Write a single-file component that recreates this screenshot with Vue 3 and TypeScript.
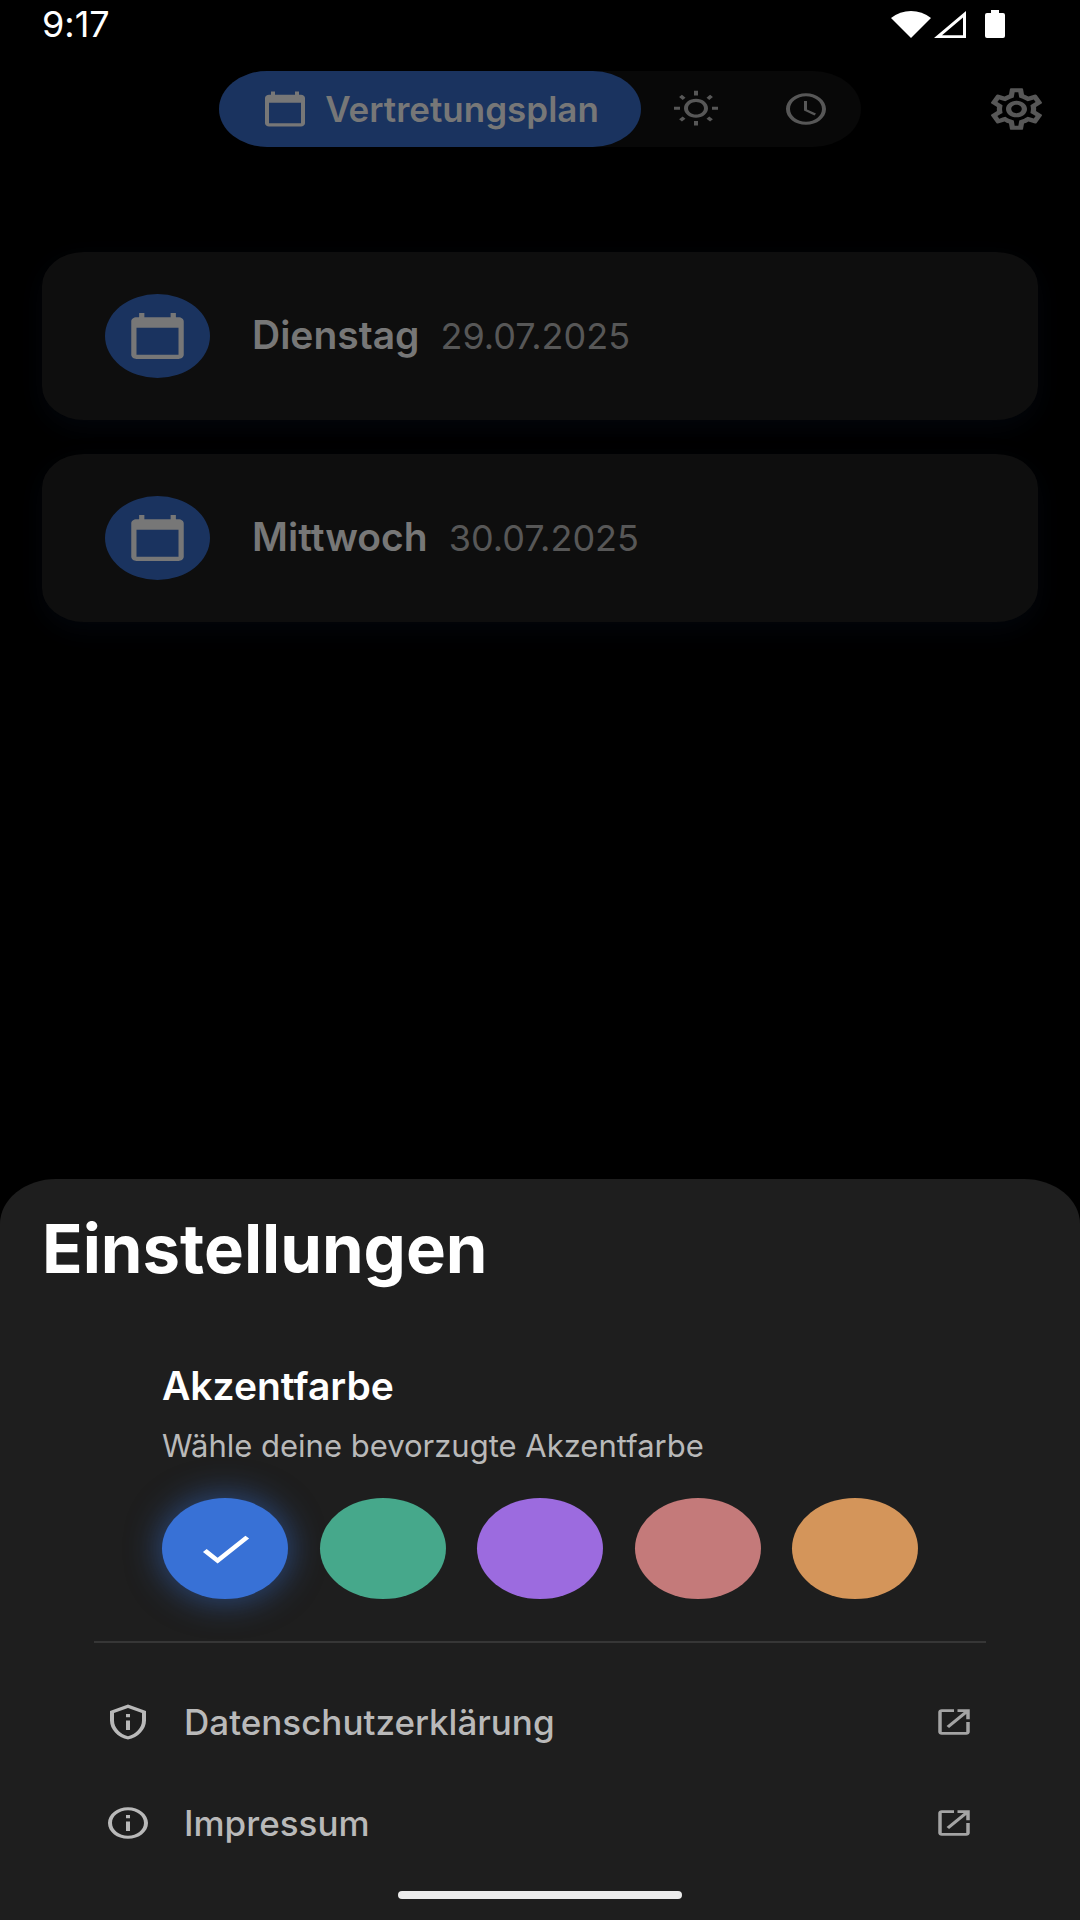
<script setup lang="ts">
import { ref } from 'vue'

interface Day {
  name: string
  date: string
}

interface Accent {
  id: string
  label: string
  color: string
}

interface LegalLink {
  id: string
  label: string
  icon: string
}

const calendarIcon =
  'M20 3h-1V1h-2v2H7V1H5v2H4c-1.1 0-2 .9-2 2v16c0 1.1.9 2 2 2h16c1.1 0 2-.9 2-2V5c0-1.1-.9-2-2-2zm0 18H4V8h16v13z'
const sunIcon =
  'M6.76 4.84l-1.8-1.79-1.41 1.41 1.79 1.79 1.42-1.41zM4 10.5H1v2h3v-2zm9-9.95h-2V3.5h2V.55zm7.45 3.91l-1.41-1.41-1.79 1.79 1.41 1.41 1.79-1.79zm-3.21 13.7l1.79 1.8 1.41-1.41-1.8-1.79-1.4 1.4zM20 10.5v2h3v-2h-3zm-8-5c-3.31 0-6 2.69-6 6s2.69 6 6 6 6-2.69 6-6-2.69-6-6-6zm0 10c-2.21 0-4-1.79-4-4s1.79-4 4-4 4 1.79 4 4-1.79 4-4 4zm-1 6.95h2V19.5h-2v2.95zm-7.45-3.91l1.41 1.41 1.79-1.8-1.41-1.41-1.79 1.8z'
const clockIcon =
  'M11.99 2C6.47 2 2 6.48 2 12s4.47 10 9.99 10C17.52 22 22 17.52 22 12S17.52 2 11.99 2zM12 20c-4.42 0-8-3.58-8-8s3.58-8 8-8 8 3.58 8 8-3.58 8-8 8zm.5-13H11v6l5.25 3.15.75-1.23-4.5-2.67z'
const gearIcon =
  'M19.43 12.98c.04-.32.07-.64.07-.98 0-.34-.03-.66-.07-.98l2.11-1.65c.19-.15.24-.42.12-.64l-2-3.46c-.09-.16-.26-.25-.44-.25-.06 0-.12.01-.17.03l-2.49 1c-.52-.4-1.08-.73-1.69-.98l-.38-2.65C14.46 2.18 14.25 2 14 2h-4c-.25 0-.46.18-.49.42l-.38 2.65c-.61.25-1.17.59-1.69.98l-2.49-1c-.06-.02-.12-.03-.18-.03-.17 0-.34.09-.43.25l-2 3.46c-.13.22-.07.49.12.64l2.11 1.65c-.04.32-.07.65-.07.98 0 .33.03.66.07.98l-2.11 1.65c-.19.15-.24.42-.12.64l2 3.46c.09.16.26.25.44.25.06 0 .12-.01.17-.03l2.49-1c.52.4 1.08.73 1.69.98l.38 2.65c.03.24.24.42.49.42h4c.25 0 .46-.18.49-.42l.38-2.65c.61-.25 1.17-.59 1.69-.98l2.49 1c.06.02.12.03.18.03.17 0 .34-.09.43-.25l2-3.46c.12-.22.07-.49-.12-.64l-2.11-1.65zm-1.98-1.71c.04.31.05.52.05.73 0 .21-.02.43-.05.73l-.14 1.13.89.7 1.08.84-.7 1.21-1.27-.51-1.04-.42-.9.68c-.43.32-.84.56-1.25.73l-1.06.43-.16 1.13-.2 1.35h-1.4l-.19-1.35-.16-1.13-1.06-.43c-.43-.18-.83-.41-1.23-.71l-.91-.7-1.06.43-1.27.51-.7-1.21 1.08-.84.89-.7-.14-1.13c-.03-.31-.05-.54-.05-.74s.02-.43.05-.73l.14-1.13-.89-.7-1.08-.84.7-1.21 1.27.51 1.04.42.9-.68c.43-.32.84-.56 1.25-.73l1.06-.43.16-1.13.2-1.35h1.39l.19 1.35.16 1.13 1.06.43c.43.18.83.41 1.23.71l.91.7 1.06-.43 1.27-.51.7 1.21-1.07.85-.89.7.14 1.13zM12 8c-2.21 0-4 1.79-4 4s1.79 4 4 4 4-1.79 4-4-1.79-4-4-4zm0 6c-1.1 0-2-.9-2-2s.9-2 2-2 2 .9 2 2-.9 2-2 2z'
const shieldIcon =
  'M12 1L3 5v6c0 5.55 3.84 10.74 9 12 5.16-1.26 9-6.45 9-12V5l-9-4zm7 10c0 4.52-2.98 8.69-7 9.93-4.02-1.24-7-5.4-7-9.93V6.3l7-3.11 7 3.11V11zm-8 0h2v6h-2v-6zm0-4h2v2h-2V7z'
const infoIcon =
  'M11 7h2v2h-2zm0 4h2v6h-2zm1-9C6.48 2 2 6.48 2 12s4.48 10 10 10 10-4.48 10-10S17.52 2 12 2zm0 18c-4.41 0-8-3.59-8-8s3.59-8 8-8 8 3.59 8 8-3.59 8-8 8z'
const openIcon =
  'M19 19H5V5h7V3H5c-1.11 0-2 .9-2 2v14c0 1.1.89 2 2 2h14c1.1 0 2-.9 2-2v-7h-2v7zM14 3v2h3.59l-9.83 9.83 1.41 1.41L19 6.41V10h2V3h-7z'
const checkIcon = 'M9 16.17L4.83 12l-1.42 1.41L9 19 21 7l-1.41-1.41z'

const days: Day[] = [
  { name: 'Dienstag', date: '29.07.2025' },
  { name: 'Mittwoch', date: '30.07.2025' },
]

const accents: Accent[] = [
  { id: 'blue', label: 'Blau', color: '#3871d6' },
  { id: 'green', label: 'Grün', color: '#46a88b' },
  { id: 'purple', label: 'Violett', color: '#9c6bdf' },
  { id: 'rose', label: 'Rosé', color: '#c47a7a' },
  { id: 'orange', label: 'Orange', color: '#d4955a' },
]

const links: LegalLink[] = [
  { id: 'datenschutz', label: 'Datenschutzerklärung', icon: shieldIcon },
  { id: 'impressum', label: 'Impressum', icon: infoIcon },
]

const selected = ref('blue')
</script>

<template>
  <div class="screen">
    <div class="status">
      <span class="time">9:17</span>
      <div class="indicators">
        <svg class="wifi" viewBox="0 0 40 28" aria-hidden="true">
          <path d="M0 8Q9 1 20 1T40 8L20 28Z" />
        </svg>
        <svg class="signal" viewBox="0 0 32 28" aria-hidden="true">
          <path fill-rule="evenodd" d="M32 1V28H0ZM29 7.5L8 25.2H29Z" />
        </svg>
        <svg class="battery" viewBox="0 0 20 28" aria-hidden="true">
          <path d="M6 0h8v3h4q2 0 2 2v21q0 2-2 2H2q-2 0-2-2V5q0-2 2-2h4Z" />
        </svg>
      </div>
    </div>

    <header class="topbar">
      <nav class="tabs" aria-label="Ansicht">
        <button type="button" class="tab active">
          <svg class="icon-s" viewBox="0 0 24 24" preserveAspectRatio="none" aria-hidden="true">
            <path :d="calendarIcon" />
          </svg>
          <span>Vertretungsplan</span>
        </button>
        <button type="button" class="tab" aria-label="Wetter">
          <svg class="icon-s" viewBox="0 0 24 24" preserveAspectRatio="none" aria-hidden="true">
            <path :d="sunIcon" />
          </svg>
        </button>
        <button type="button" class="tab" aria-label="Stundenplan">
          <svg class="icon-s" viewBox="0 0 24 24" preserveAspectRatio="none" aria-hidden="true">
            <path :d="clockIcon" />
          </svg>
        </button>
      </nav>
      <button type="button" class="gear" aria-label="Einstellungen öffnen">
        <svg class="icon-l" viewBox="0 0 24 24" preserveAspectRatio="none" aria-hidden="true">
          <path :d="gearIcon" />
        </svg>
      </button>
    </header>

    <main class="days">
      <button v-for="day in days" :key="day.date" type="button" class="day">
        <span class="avatar">
          <svg class="icon-l" viewBox="0 0 24 24" preserveAspectRatio="none" aria-hidden="true">
            <path :d="calendarIcon" />
          </svg>
        </span>
        <span class="label">
          <span class="name">{{ day.name }}</span>
          <span class="date">{{ day.date }}</span>
        </span>
      </button>
    </main>

    <section class="sheet" aria-labelledby="sheet-title">
      <h1 id="sheet-title">Einstellungen</h1>

      <div class="accent">
        <h2 id="accent-title">Akzentfarbe</h2>
        <p>Wähle deine bevorzugte Akzentfarbe</p>
        <div class="swatches" role="radiogroup" aria-labelledby="accent-title">
          <label
            v-for="accent in accents"
            :key="accent.id"
            class="swatch"
            :class="{ selected: selected === accent.id }"
            :style="{ '--accent': accent.color }"
          >
            <input
              v-model="selected"
              type="radio"
              name="accent"
              :value="accent.id"
              :aria-label="accent.label"
            />
            <svg
              v-if="selected === accent.id"
              class="icon-l"
              viewBox="0 0 24 24"
              preserveAspectRatio="none"
              aria-hidden="true"
            >
              <path :d="checkIcon" />
            </svg>
          </label>
        </div>
      </div>

      <div class="legal">
        <a v-for="link in links" :key="link.id" :href="'#' + link.id">
          <svg class="icon-s" viewBox="0 0 24 24" preserveAspectRatio="none" aria-hidden="true">
            <path :d="link.icon" />
          </svg>
          <span>{{ link.label }}</span>
          <svg class="icon-xs" viewBox="0 0 24 24" preserveAspectRatio="none" aria-hidden="true">
            <path :d="openIcon" />
          </svg>
        </a>
      </div>

      <div class="home-bar"></div>
    </section>
  </div>
</template>

<style>
body {
  background: #000;
}
</style>

<style scoped>
.screen {
  display: flex;
  flex-direction: column;
  min-height: 100vh;
  background: #000;
  color: #fff;
  font-family: Inter, Roboto, sans-serif;
  font-variant-ligatures: none;
}

button {
  margin: 0;
  padding: 0;
  border: 0;
  background: none;
  color: inherit;
  font: inherit;
  font-variant-ligatures: none;
  text-align: left;
}

svg {
  display: block;
  flex: none;
  fill: currentColor;
}

.icon-xs {
  width: 42px;
  height: 34px;
}

.icon-s {
  width: 48px;
  height: 38px;
}

.icon-l {
  width: 63px;
  height: 50px;
}

.status {
  display: flex;
  justify-content: space-between;
  align-items: center;
  height: 48px;
  padding: 0 75px 0 42px;
}

.time {
  font-size: 36px;
  line-height: 40px;
}

.indicators {
  display: flex;
}

.wifi {
  width: 40px;
  height: 28px;
}

.signal {
  width: 32px;
  height: 28px;
  margin-left: 3px;
}

.battery {
  width: 20px;
  height: 28px;
  margin-left: 19px;
}

.topbar {
  display: grid;
  grid-template-columns: 1fr auto 1fr;
  align-items: center;
  margin-top: 23px;
  padding: 0 32px;
}

.tabs {
  grid-column: 2;
  display: flex;
  height: 76px;
  border-radius: 48px / 38px;
  background: #080808;
  color: #575757;
}

.tab {
  display: flex;
  align-items: center;
  justify-content: center;
  width: 110px;
}

.tab.active {
  gap: 16px;
  width: auto;
  padding: 0 42px;
  border-radius: 48px / 38px;
  background: #1a335f;
  color: #777;
  font-size: 35px;
  font-weight: 600;
}

.gear {
  justify-self: end;
  color: #575757;
}

.days {
  display: flex;
  flex: 1;
  flex-direction: column;
  gap: 34px;
  padding: 105px 42px 34px;
}

.day {
  display: flex;
  align-items: center;
  gap: 42px;
  height: 168px;
  padding: 0 63px;
  border-radius: 42px / 34px;
  background: #0e0e0e;
  box-shadow: 0 8px 28px rgba(26, 51, 95, 0.12);
}

.avatar {
  display: flex;
  align-items: center;
  justify-content: center;
  width: 105px;
  height: 84px;
  border-radius: 50%;
  background: #1a335f;
  color: #777;
}

.label {
  display: flex;
  align-items: baseline;
  gap: 21px;
  padding-bottom: 4px;
}

.name {
  color: #777;
  font-size: 39px;
  font-weight: 600;
}

.date {
  color: #575757;
  font-size: 36px;
}

.sheet {
  display: flex;
  flex-direction: column;
  padding: 32px 0 21px;
  border-radius: 56px 56px 0 0 / 45px 45px 0 0;
  background: #1e1e1e;
}

h1 {
  margin: 0 42px;
  font-size: 67px;
  font-weight: 700;
  line-height: 76px;
}

.accent {
  margin: 79px 94px 0;
  padding: 0 68px 42px;
  border-bottom: 2px solid #363636;
}

h2 {
  margin: 0;
  font-size: 39px;
  font-weight: 600;
  line-height: 40px;
}

p {
  margin: 24px 0 0;
  color: #b9b9b9;
  font-size: 31px;
  line-height: 32px;
}

.swatches {
  display: flex;
  justify-content: space-between;
  margin-top: 36px;
}

.swatch {
  display: grid;
  place-items: center;
  width: 126px;
  height: 101px;
  border-radius: 50%;
  background: var(--accent);
}

.swatch.selected {
  box-shadow: 0 0 32px 3px rgba(56, 113, 214, 0.5);
}

.swatch input {
  grid-area: 1 / 1;
  width: 100%;
  height: 100%;
  margin: 0;
  border-radius: 50%;
  appearance: none;
}

.swatch svg {
  grid-area: 1 / 1;
  pointer-events: none;
}

.legal {
  display: flex;
  flex-direction: column;
  padding: 28px 94px 0;
}

.legal a {
  display: flex;
  align-items: center;
  gap: 32px;
  height: 101px;
  padding: 0 11px 0 10px;
  color: #b9b9b9;
  font-size: 35px;
  font-weight: 500;
  text-decoration: none;
}

.legal .icon-xs {
  margin-left: auto;
  color: #a4a4a4;
}

.home-bar {
  align-self: center;
  width: 284px;
  height: 8px;
  margin-top: 18px;
  border-radius: 4px;
  background: #ececec;
}
</style>
